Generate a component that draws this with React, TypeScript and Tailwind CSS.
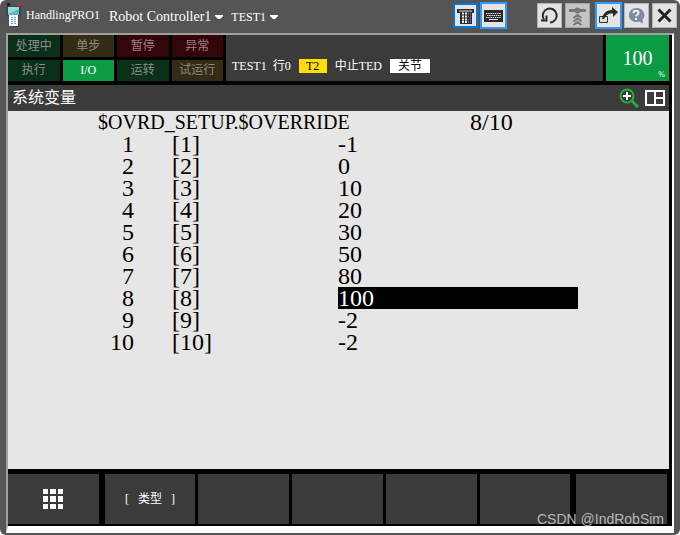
import type { ReactNode } from 'react'

const statusCells = [
  { label: '处理中', style: 'bg-[#0b3019] text-[#8a8f8b]' },
  { label: '单步', style: 'bg-[#332d16] text-[#8f8b7e]' },
  { label: '暂停', style: 'bg-[#33070a] text-[#a07f80]' },
  { label: '异常', style: 'bg-[#33070a] text-[#a07f80]' },
  { label: '执行', style: 'bg-[#0b3019] text-[#8a8f8b]' },
  { label: 'I/O', style: 'bg-[#0a9b43] text-white' },
  { label: '运转', style: 'bg-[#0b3019] text-[#8a8f8b]' },
  { label: '试运行', style: 'bg-[#332d16] text-[#8f8b7e]' },
]

const overrides = [-1, 0, 10, 20, 30, 50, 80, 100, -2, -2]
const selectedRow = 7

const serif = "font-['Liberation_Serif','Noto_Sans_CJK_SC',serif]"

function PendantIcon() {
  return (
    <svg width="18" height="26" viewBox="0 0 18 26" aria-hidden="true">
      <path d="M2 4h15v9l-2 3v9H5v-9l-3-3z" fill="#39464b" />
      <rect x="4" y="5" width="11" height="8" fill="#5fb9bb" />
      <path d="M4 5h11v2L4 12z" fill="#9adcdc" />
      <rect x="3" y="1" width="3" height="3" fill="#1d1d1d" />
      <rect x="14" y="1" width="3" height="3" fill="#c9302a" />
      <rect x="5" y="13" width="9" height="11" fill="#f5fafc" />
      <path d="M7 15.500h2m1 0h2M7 17.500h2m1 0h2M7 19.500h2m1 0h2M7 21.500h2m1 0h2" stroke="#5fa8d3" />
    </svg>
  )
}

function ToolButton({ label, variant, children }: { label: string; variant: string; children: ReactNode }) {
  return (
    <button type="button" aria-label={label} className={`flex items-center justify-center ${variant}`}>
      {children}
    </button>
  )
}

const plain = 'size-[25px] border border-[#b5b5b5] bg-[#e2e2e2]'
const active = 'size-[27px] border-2 border-[#3399ff] bg-[#e4e4e4]'

function Caret() {
  return (
    <svg width="8" height="4" viewBox="0 0 8 4" aria-hidden="true">
      <path d="M0 0h8v1L5 4H3L0 1z" fill="#fff" />
    </svg>
  )
}

function TitleBar() {
  return (
    <header className="flex h-[33px] items-start pl-1">
      <div className="flex flex-1 items-center pt-0.5 text-white">
        <PendantIcon />
        <h1 className="ml-1 text-xs">HandlingPRO1</h1>
        <button type="button" className="ml-[9px] flex items-center gap-1 pt-1 text-sm leading-4">
          Robot Controller1 <Caret />
        </button>
        <button type="button" className="ml-2 flex items-center gap-1 pt-1 text-xs">
          TEST1 <Caret />
        </button>
      </div>
      <div className="flex h-[31px] items-center pr-[3px]">
        <ToolButton label="Teach pendant" variant="mr-0.5 size-[25px] border-2 border-[#0078d7] bg-[#e4e4e4]">
          <svg width="19" height="18" viewBox="0 0 19 18">
            <path d="M1 2h17v4h-2v11H4V6H1z" fill="#2b2b2b" />
            <path d="M3 4h13" stroke="#ddd" />
            <path d="M6 6.500h5M6 9.500h5M6 12.500h5M6 15h5" stroke="#ececec" strokeWidth="2" strokeDasharray="2 1" />
            <path d="M12 6.500h3M12 9.500h3M12 12.500h3M12 15h3" stroke="#4f74b8" strokeWidth="2" strokeDasharray="1 1" />
          </svg>
        </ToolButton>
        <ToolButton label="Keyboard" variant={`mr-[30px] ${active}`}>
          <svg width="19" height="12" viewBox="0 0 19 12">
            <rect width="19" height="12" fill="#292929" />
            <path d="M2 3.500h15M3 5.500h14M2 7.500h15" stroke="#e6e6e6" strokeDasharray="1.500 .7" />
            <path d="M5 9.500h9" stroke="#e6e6e6" />
          </svg>
        </ToolButton>
        <ToolButton label="Reset" variant={`mr-[3px] ${plain}`}>
          <svg width="19" height="19" viewBox="0 0 19 19" fill="none" stroke="#2b2b2b" strokeWidth="2">
            <path d="M10 16.500A7 7 0 1 0 4 13.500" />
            <path d="M1 14.500h5.500V9.500" />
          </svg>
        </ToolButton>
        <ToolButton label="Jog" variant="mr-[5px] size-[25px] border border-[#a5a5a5] bg-[#c4c4c4]">
          <svg width="19" height="20" viewBox="0 0 19 20" fill="none" stroke="#777">
            <path d="M1 4.500h17" strokeWidth="3" />
            <circle cx="9.500" cy="4.500" r="3" fill="#777" stroke="none" />
            <path d="M5.500 12l4-3 4 3M5.500 15.500l4-3 4 3M5.500 19l4-3 4 3" strokeWidth="2" />
          </svg>
        </ToolButton>
        <ToolButton label="Undock" variant={`mr-0.5 ${active}`}>
          <svg width="21" height="19" viewBox="0 0 21 19">
            <path d="M1.500 10.500h8v6h-8z" fill="#ddd" stroke="#333" />
            <path d="M4 13C5 7 9 4 14 4V1l6 5-5 5V7.500c-4-.5-7 1-9 5.500z" fill="#292929" />
          </svg>
        </ToolButton>
        <ToolButton label="Help" variant={`mr-[3px] ${plain}`}>
          <svg width="19" height="19" viewBox="0 0 19 19">
            <path d="M9 2a7.500 7 0 1 0 3 13.500l4 2-.5-4A7.500 7 0 0 0 9 2z" fill="#7e8ba6" />
            <path d="M6.500 7c0-3 5-3 5 0 0 2-2.500 1.500-2.500 3.500M9 12v2" fill="none" stroke="#f1f1f1" strokeWidth="2" />
          </svg>
        </ToolButton>
        <ToolButton label="Close" variant={plain}>
          <svg width="17" height="17" viewBox="0 0 17 17">
            <path d="M2.500 2.500l12 12m0-12l-12 12" stroke="#222" strokeWidth="3" />
          </svg>
        </ToolButton>
      </div>
    </header>
  )
}

function StatusBar() {
  return (
    <div className="flex gap-[3px] pb-1 pr-[3px]">
      <div className="grid h-[46px] w-[215px] grid-cols-4 gap-[3px] text-xs">
        {statusCells.map((cell) => (
          <div key={cell.label} className={`flex items-center justify-center ${cell.style}`}>
            {cell.label}
          </div>
        ))}
      </div>
      <div className="flex flex-1 items-end bg-[#3b3b3b] px-1.5 pb-2 text-xs leading-[14px] text-white">
        <span>TEST1&nbsp; 行0</span>
        <span className="ml-2 w-7 bg-[#ffdc0a] text-center text-black">T2</span>
        <span className="ml-2">中止TED</span>
        <span className="ml-2 w-10 bg-white text-center text-black">关节</span>
      </div>
      <div className="relative flex w-[63px] items-center justify-center bg-[#0a9b43] text-xl text-white">
        100
        <span className="absolute bottom-0 right-1 text-[8px] leading-3">%</span>
      </div>
    </div>
  )
}

function VariableTable() {
  return (
    <main className="mr-[3px] flex-1 bg-[#e6e6e6] text-black">
      <table className="w-[570px] table-fixed border-collapse text-2xl leading-[22px]">
        <colgroup>
          <col className="w-[126px]" />
          <col className="w-[204px]" />
          <col className="w-[132px]" />
          <col />
        </colgroup>
        <thead>
          <tr className="h-[22px] text-left">
            <th colSpan={3} className="p-0 pl-[90px] text-xl leading-[22px] font-normal">$OVRD_SETUP.$OVERRIDE</th>
            <th className="p-0 font-normal">8/10</th>
          </tr>
        </thead>
        <tbody>
          {overrides.map((value, i) => (
            <tr key={i} className="h-[22px]">
              <td className="p-0 text-right">{i + 1}</td>
              <td className="p-0 pl-[38px]">[{i + 1}]</td>
              <td colSpan={2} className={i === selectedRow ? 'bg-black p-0 text-white' : 'p-0'}>
                {value}
              </td>
            </tr>
          ))}
        </tbody>
      </table>
    </main>
  )
}

function FunctionKeys() {
  const key = 'flex h-[50px] flex-1 items-center justify-center bg-[#3b3b3b] text-xs text-white'
  return (
    <nav className="flex gap-[3px] pb-0.5 pr-[5px] pt-[5px]">
      <button type="button" aria-label="Menu" className={`${key} mr-[3px]`}>
        <svg width="20" height="20" viewBox="0 0 20 20" fill="#fff">
          <path d="M0 0h5v5H0zM7 0h6v5H7zM15 0h5v5h-5zM0 7h5v6H0zM7 7h6v6H7zM15 7h5v6h-5zM0 15h5v5H0zM7 15h6v5H7zM15 15h5v5h-5z" />
        </svg>
      </button>
      <button type="button" className={key}>[&nbsp;&nbsp; 类型&nbsp;&nbsp; ]</button>
      <button type="button" aria-label="F2" className={key} />
      <button type="button" aria-label="F3" className={key} />
      <button type="button" aria-label="F4" className={key} />
      <button type="button" aria-label="F5" className={key} />
      <button type="button" aria-label="Next" className={`${key} ml-[3px]`} />
    </nav>
  )
}

export default function App() {
  return (
    <div className={`relative flex min-h-screen flex-col rounded-md bg-[#555] ${serif}`}>
      <TitleBar />
      <div className="mb-0.5 ml-1.5 mr-1.5 flex flex-1 flex-col border-2 border-b-[7px] border-b-white border-l-[#a0a0a0] border-r-white border-t-[#a0a0a0] bg-black">
        <StatusBar />
        <div className="mr-[3px] flex h-[26px] items-center bg-[#3b3b3b] px-1 text-white">
          <h2 className="flex-1 text-base">系统变量</h2>
          <svg width="20" height="20" viewBox="0 0 20 20" fill="none" aria-hidden="true">
            <path d="M13 13l6 6" stroke="#22b13f" strokeWidth="3" />
            <circle cx="8" cy="8" r="6.500" stroke="#22b13f" strokeWidth="2" />
            <path d="M8 4v8M4 8h8" stroke="#fff" strokeWidth="2" />
          </svg>
          <svg className="ml-1.5" width="20" height="16" viewBox="0 0 20 16" fill="none" stroke="#fff" strokeWidth="2" aria-hidden="true">
            <path d="M1 1h18v14H1zM10 1v14M10 8h9" />
          </svg>
        </div>
        <VariableTable />
        <FunctionKeys />
      </div>
      <p className="absolute bottom-2 right-4 font-['Liberation_Sans',sans-serif] text-sm leading-4 text-[#b8b8b8]">
        CSDN @IndRobSim
      </p>
    </div>
  )
}
